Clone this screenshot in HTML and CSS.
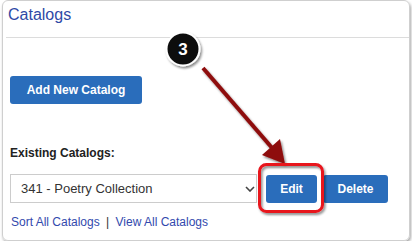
FILE: index.html
```html
<!DOCTYPE html>
<html lang="en">
<head>
  <meta charset="UTF-8">
  <title>Catalogs</title>
  <link rel="stylesheet" href="styles.css">
</head>
<body>
  <div class="panel">
    <div class="panel-head">
      <h2>Catalogs</h2>
    </div>
    <div class="panel-body">
      <button class="btn btn-add">Add New Catalog</button>
      <div class="label">Existing Catalogs:</div>
      <div class="catalog-row">
        <select class="catalog-select">
          <option>341 - Poetry Collection</option>
        </select>
        <button class="btn btn-edit">Edit</button>
        <button class="btn btn-delete">Delete</button>
      </div>
      <div class="links">
        <a href="#">Sort All Catalogs</a>
        <span class="sep">|</span>
        <a href="#">View All Catalogs</a>
      </div>
    </div>

    <!-- annotation on top of the screenshot -->
    <svg class="callout" width="412" height="244" viewBox="0 0 412 244">
      <defs>
        <filter id="shade" x="-20%" y="-20%" width="140%" height="140%">
          <feDropShadow dx="1.5" dy="2" stdDeviation="1.3" flood-color="#000" flood-opacity="0.45"/>
        </filter>
      </defs>
      <g filter="url(#shade)">
        <line x1="203" y1="68" x2="273" y2="149" stroke="#8e0b0b" stroke-width="4"/>
        <polygon points="262,155 280,139 285,164" fill="#8e0b0b"/>
      </g>
      <rect x="259.5" y="164.5" width="63" height="47" rx="7" fill="none" stroke="#e8121c" stroke-width="3" filter="url(#shade)"/>
      <g filter="url(#shade)">
        <circle cx="183" cy="49" r="16.5" fill="#111" stroke="#fff" stroke-width="2"/>
      </g>
      <text x="183" y="55" class="badge-num" text-anchor="middle">3</text>
    </svg>
  </div>
</body>
</html>
```
FILE: styles.css
```css
body {
  margin: 0;
  font-family: 'Liberation Sans', Arial, sans-serif;
  background-color: #fff;
}

.panel {
  position: relative;
  margin: 0 2px;
  height: 241px;
  box-sizing: border-box;
  border: 1px solid #cfcfcf;
  border-radius: 6px;
  box-shadow: 1px 2px 3px rgba(0, 0, 0, 0.35);
}

.panel-head {
  margin-left: 3px;
  height: 37px;
  box-sizing: border-box;
  padding: 4px 0 0 2px;
  border-bottom: 1px solid #dcdcdc;
}

.panel-head h2 {
  margin: 0;
  font-size: 16px;
  line-height: 20px;
  font-weight: normal;
  color: #2f49a6;
}

.panel-body {
  padding-left: 7px;
}

.btn {
  border: none;
  border-radius: 3px;
  background-color: #2a6dbb;
  color: #fff;
  font-family: inherit;
  font-size: 12px;
  font-weight: bold;
  height: 28px;
  padding: 0;
  cursor: pointer;
}

.btn-add {
  display: block;
  margin-top: 38px;
  width: 132px;
}

.label {
  margin-top: 42px;
  font-size: 12px;
  line-height: 14px;
  font-weight: bold;
  color: #222;
}

.catalog-row {
  display: flex;
  align-items: center;
  margin-top: 14px;
}

.catalog-select {
  width: 247px;
  height: 29px;
  box-sizing: border-box;
  border: 1px solid #cccccc;
  border-radius: 0;
  padding: 0 0 0 10px;
  font-family: inherit;
  font-size: 13px;
  color: #333;
  background: #fff url("data:image/svg+xml;utf8,<svg xmlns='http://www.w3.org/2000/svg' width='10' height='6'><path d='M1 1l4 4 4-4' fill='none' stroke='%23444' stroke-width='1.6'/></svg>") no-repeat right 1px center;
  -webkit-appearance: none;
  appearance: none;
}

.btn-edit {
  margin-left: 9px;
  width: 51px;
}

.btn-delete {
  margin-left: 6px;
  width: 65px;
}

.links {
  margin-top: 12px;
  font-size: 12px;
  line-height: 14px;
  padding-left: 1px;
}

.links a {
  color: #3249ad;
  text-decoration: none;
}

.sep {
  color: #333;
  padding: 0 3px;
}

.callout {
  position: absolute;
  left: -3px;
  top: -1px;
  pointer-events: none;
  overflow: visible;
}

.badge-num {
  fill: #fff;
  font-family: 'Liberation Sans', Arial, sans-serif;
  font-size: 17px;
  font-weight: bold;
}
```
